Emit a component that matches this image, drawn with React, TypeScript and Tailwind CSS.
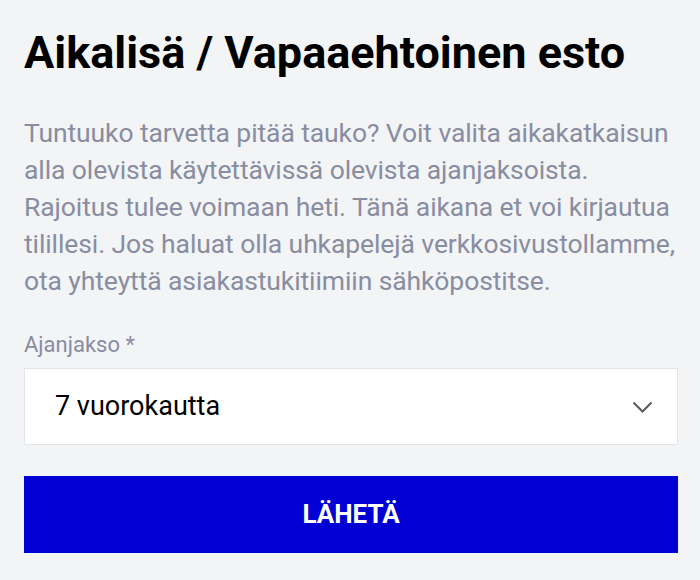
import React from "react";

const lines = [
    "Tuntuuko tarvetta pitää tauko? Voit valita aikakatkaisun",
    "alla olevista käytettävissä olevista ajanjaksoista.",
    "Rajoitus tulee voimaan heti. Tänä aikana et voi kirjautua",
    "tilillesi. Jos haluat olla uhkapelejä verkkosivustollamme,",
    "ota yhteyttä asiakastukitiimiin sähköpostitse.",
];

export default function App() {
    return (
        <div className="w-[700px] h-[580px] overflow-hidden bg-[#f3f4f6] pl-6 pr-[22px] pt-[26px] font-['Roboto',sans-serif]">
            {/* Heading */}
            <h1 className="text-[45px] leading-[54px] font-bold text-black">
                Aikalisä / Vapaaehtoinen esto
            </h1>

            {/* Description */}
            <p className="mt-[34px] text-[26.5px] leading-[37px] text-[#888da1] tracking-[-0.1px]">
                {lines.map((l) => (
                    <span key={l} className="block whitespace-nowrap">{l}</span>
                ))}
            </p>

            {/* Period select */}
            <div className="mt-[33px]">
                <label className="block text-[22px] leading-[26px] text-[#888da1]">Ajanjakso *</label>
                <div className="mt-[10px] h-[77px] bg-white border border-[#e3e5ea] flex items-center justify-between pl-[30px] pr-[24px]">
                    <span className="text-[27px] text-black">7 vuorokautta</span>
                    <svg width="21" height="12" viewBox="0 0 21 12" fill="none" stroke="#585b64" strokeWidth="2">
                        <path d="M1.5 1.5l9 9 9-9" />
                    </svg>
                </div>
            </div>

            {/* Submit */}
            <button className="mt-[31px] w-full h-[77px] bg-[#0000d4] text-white text-[26px] font-bold">
                LÄHETÄ
            </button>
        </div>
    );
}
